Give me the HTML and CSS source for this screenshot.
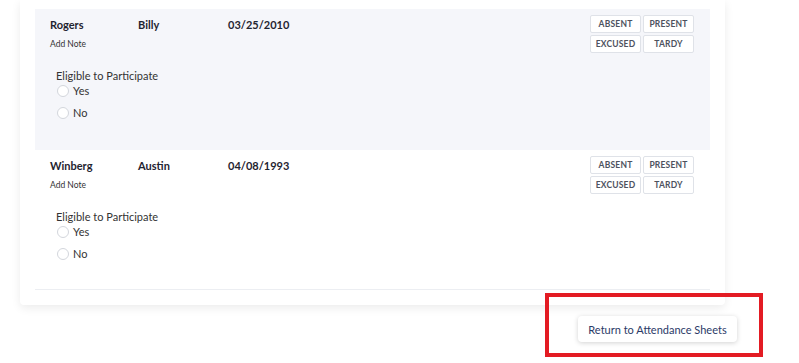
FILE: index.html
```html
<!DOCTYPE html>
<html lang="en">

<head>
    <meta charset="UTF-8">
    <meta name="viewport" content="width=device-width, initial-scale=1.0">
    <title>Attendance</title>
    <link rel="stylesheet" href="styles.css">
</head>

<body>
    <div class="card">
        <div class="row shaded">
            <div class="info">
                <div class="names">
                    <span class="last">Rogers</span>
                    <span class="first">Billy</span>
                    <span class="dob">03/25/2010</span>
                </div>
                <div class="note">Add Note</div>
                <div class="eligible">
                    <div class="label">Eligible to Participate</div>
                    <label class="radio"><span class="dot"></span>Yes</label>
                    <label class="radio"><span class="dot"></span>No</label>
                </div>
            </div>
            <div class="status">
                <span class="btn">ABSENT</span>
                <span class="btn">PRESENT</span>
                <span class="btn">EXCUSED</span>
                <span class="btn">TARDY</span>
            </div>
        </div>
        <div class="row">
            <div class="info">
                <div class="names">
                    <span class="last">Winberg</span>
                    <span class="first">Austin</span>
                    <span class="dob">04/08/1993</span>
                </div>
                <div class="note">Add Note</div>
                <div class="eligible">
                    <div class="label">Eligible to Participate</div>
                    <label class="radio"><span class="dot"></span>Yes</label>
                    <label class="radio"><span class="dot"></span>No</label>
                </div>
            </div>
            <div class="status">
                <span class="btn">ABSENT</span>
                <span class="btn">PRESENT</span>
                <span class="btn">EXCUSED</span>
                <span class="btn">TARDY</span>
            </div>
        </div>
    </div>

    <div class="footer">
        <button class="return">Return to Attendance Sheets</button>
    </div>
    <div class="highlight"></div>
</body>

</html>
```

FILE: styles.css
```css
* {
    margin: 0;
    padding: 0;
    box-sizing: border-box;
}

body {
    background-color: #fff;
    font-family: "Lato", "Liberation Sans", sans-serif;
    color: #1f2430;
    position: relative;
    height: 363px;
    overflow: hidden;
}

.card {
    width: 705px;
    margin-left: 20px;
    padding: 9px 15px 15px;
    background-color: #fff;
    border-radius: 0 0 4px 4px;
    box-shadow: 0 3px 10px rgba(0, 0, 0, 0.08);
}

.row {
    height: 140px;
    display: flex;
    justify-content: space-between;
    align-items: flex-start;
    padding: 6px 16px 0 15px;
    border-bottom: 1px solid #eceef2;
}

.row.shaded {
    height: 141px;
    background-color: #f5f6fa;
    border-bottom: none;
}

.info {
    padding-top: 3px;
}

.names {
    display: flex;
    font-size: 11px;
    font-weight: 700;
    line-height: 14px;
}

.last {
    width: 88px;
}

.first {
    width: 90px;
}

.note {
    margin-top: 6px;
    font-size: 8.5px;
    color: #333;
    line-height: 12px;
}

.eligible {
    margin-top: 19px;
    padding-left: 6px;
    font-size: 11px;
    color: #333;
}

.label {
    line-height: 14px;
}

.radio {
    display: flex;
    align-items: center;
    height: 22px;
    line-height: 14px;
}

.radio:first-of-type {
    height: 15px;
    margin-bottom: 4px;
}

.dot {
    width: 12px;
    height: 12px;
    margin: 0 4px 0 1px;
    border: 1px solid #d3d6dc;
    border-radius: 50%;
    background-color: #fff;
}

.status {
    display: grid;
    grid-template-columns: 51px 51px;
    gap: 2px;
}

.btn {
    height: 18px;
    line-height: 16px;
    text-align: center;
    font-size: 8.5px;
    font-weight: 700;
    letter-spacing: 0.2px;
    color: #4d525e;
    background-color: #fff;
    border: 1px solid #dfe2e8;
    border-radius: 2px;
}

.footer {
    display: flex;
    justify-content: flex-end;
    padding: 11px 62px 0 0;
}

.return {
    width: 159px;
    height: 26px;
    font-family: "Lato", "Liberation Sans", sans-serif;
    font-size: 11px;
    color: #2b3a67;
    background-color: #fff;
    border: none;
    border-radius: 4px;
    box-shadow: 0 1px 5px rgba(0, 0, 0, 0.18);
}

.highlight {
    position: absolute;
    left: 545px;
    top: 293px;
    width: 218px;
    height: 64px;
    border: 4px solid #e31b23;
}
```
